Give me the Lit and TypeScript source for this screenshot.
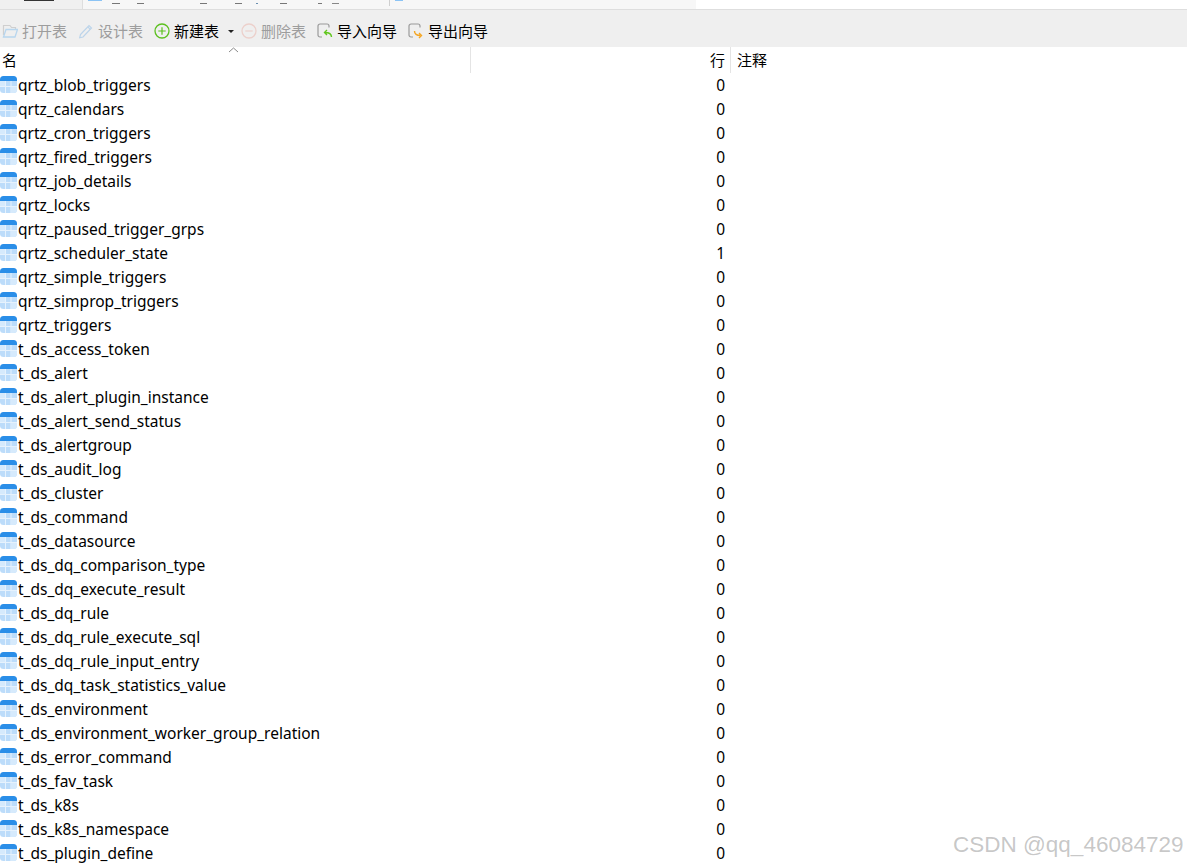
import { LitElement, html, css, svg } from "lit";
import { customElement } from "lit/decorators.js";

const ROWS: [string, number][] = [
  "qrtz_blob_triggers","qrtz_calendars","qrtz_cron_triggers","qrtz_fired_triggers","qrtz_job_details","qrtz_locks","qrtz_paused_trigger_grps","qrtz_scheduler_state","qrtz_simple_triggers","qrtz_simprop_triggers","qrtz_triggers","t_ds_access_token","t_ds_alert","t_ds_alert_plugin_instance","t_ds_alert_send_status","t_ds_alertgroup","t_ds_audit_log","t_ds_cluster","t_ds_command","t_ds_datasource","t_ds_dq_comparison_type","t_ds_dq_execute_result","t_ds_dq_rule","t_ds_dq_rule_execute_sql","t_ds_dq_rule_input_entry","t_ds_dq_task_statistics_value","t_ds_environment","t_ds_environment_worker_group_relation","t_ds_error_command","t_ds_fav_task","t_ds_k8s","t_ds_k8s_namespace","t_ds_plugin_define",
].map((n) => [n, n === "qrtz_scheduler_state" ? 1 : 0]);

const tableIcon = html`<svg class="ticon" width="17" height="17" viewBox="0 0 17 17">
  <path d="M0 5V3.500a3.500 3.500 0 0 1 3.500-3.500h10a3.500 3.500 0 0 1 3.500 3.500V5z" fill="#2a8ee8"/>
  <path d="M0 5h17v8.500a3.500 3.500 0 0 1-3.500 3.500h-10a3.500 3.500 0 0 1-3.500-3.500z" fill="#bcdcfa"/>
  <path d="M0 5h5v5H0zM11.500 10H17v3.500a3.500 3.500 0 0 1-3.500 3.500h-2z" fill="#d6eafc"/>
  <path d="M5.500 5v12M11 5v12M0 10.500h17" stroke="#e6f2fd" stroke-width="1"/>
</svg>`;

const icons = {
  open: svg`<path d="M1.500 12V2.500h6.500l1.500 2h4v2" fill="none" stroke="#cfcfcf" stroke-width="1.200"/><path d="M1.500 14l2.500-7.500h11.500L13 14z" fill="none" stroke="#b8d6ee" stroke-width="1.300"/>`,
  design: svg`<path d="M2.500 11.500L11 2.500l2.500 2.500-8.500 9-3.300.8z" fill="none" stroke="#bcd4ea" stroke-width="1.200"/><path d="M9.800 3.800l2.500 2.500" stroke="#bcd4ea" stroke-width="1.200"/>`,
  create: svg`<circle cx="8" cy="8" r="7" fill="none" stroke="#5cc01f" stroke-width="1.300"/><path d="M8 4.300v7.400M4.300 8h7.400" stroke="#5cc01f" stroke-width="1.200"/>`,
  remove: svg`<circle cx="8" cy="8" r="7" fill="none" stroke="#ecd0cb" stroke-width="1.300"/><path d="M4.300 8h7.400" stroke="#ecd0cb" stroke-width="1.200"/>`,
  imp: svg`<path d="M5 14H3a2 2 0 0 1-2-2V3a2 2 0 0 1 2-2h7a2 2 0 0 1 2 2v1.500" fill="none" stroke="#9a9a9a" stroke-width="1.200"/><path d="M14.500 14c0-3-2-4.500-6.500-4.500M10 7L7.500 9.500 10 12" fill="none" stroke="#62c71e" stroke-width="1.400"/>`,
  exp: svg`<path d="M5 14H3a2 2 0 0 1-2-2V3a2 2 0 0 1 2-2h7a2 2 0 0 1 2 2v1.500" fill="none" stroke="#9a9a9a" stroke-width="1.200"/><path d="M6.500 8c0 3 2 4.500 6 4.500M11 10l2.500 2.500L11 15" fill="none" stroke="#f5a623" stroke-width="1.400"/>`,
};

const TOOLS = [
  { icon: icons.open, label: "打开表", off: true, gap: 0 },
  { icon: icons.design, label: "设计表", off: true, gap: 11 },
  { icon: icons.create, label: "新建表", off: false, gap: 11, caret: true },
  { icon: icons.remove, label: "删除表", off: true, gap: 7 },
  { icon: icons.imp, label: "导入向导", off: false, gap: 11 },
  { icon: icons.exp, label: "导出向导", off: false, gap: 11 },
];

/* The slivers of tab titles left visible at the cropped top edge: [left offset, width, colour]. */
const SLIVERS: [number, number, string][] = [
  [10, 8, "#777"], [17, 7, "#777"], [56, 7, "#777"], [28, 7, "#777"], [14, 2, "#6a8fb0"],
  [22, 7, "#777"], [31, 4, "#777"], [10, 7, "#888"],
];

@customElement("app-root")
export class AppRoot extends LitElement {
  static styles = css`
    :host {
      display: block;
      height: 865px;
      overflow: hidden;
      position: relative;
      background: #fff;
      color: #000;
      font: 15.5px/24px "Noto Sans", "Noto Sans CJK SC", sans-serif;
    }
    .tabs {
      height: 10px;
      box-sizing: border-box;
      background: #f0f0f0;
      border-bottom: 1px solid #dedede;
      display: flex;
      overflow: hidden;
    }
    .tab-left {
      width: 82px;
      flex: none;
      padding-left: 24px;
      box-sizing: border-box;
    }
    .tab-left i {
      display: block;
      width: 30px;
      height: 1px;
      background: #333;
    }
    .tab-panel {
      width: 614px;
      flex: none;
      background: #f7f7f7;
      border-left: 1px solid #dedede;
      box-sizing: border-box;
      display: flex;
    }
    .tab-blue {
      width: 14px;
      height: 1px;
      margin-left: 5px;
      background: #8cc4f5;
      flex: none;
    }
    .sliver {
      height: 1px;
      margin-top: 3px;
      flex: none;
    }
    .tab-sep {
      width: 1px;
      height: 6px;
      margin-left: 50px;
      background: #cfcfcf;
      flex: none;
    }
    .tab-blue2 {
      width: 8px;
      height: 1px;
      margin-left: 5px;
      background: #8cc4f5;
      flex: none;
    }
    .tab-rest {
      flex: 1;
      background: #fff;
    }
    .toolbar {
      height: 37px;
      background: #efefef;
      display: flex;
      align-items: center;
      padding: 5px 0 0 2px;
      box-sizing: border-box;
      font-size: 15px;
    }
    .tool {
      display: flex;
      align-items: center;
      gap: 4px;
    }
    .tool.off {
      color: #9d9d9d;
    }
    .tool svg {
      flex: none;
    }
    .caret {
      width: 0;
      height: 0;
      margin-left: 5px;
      border: 3px solid transparent;
      border-top: 3px solid #222;
      border-bottom: 0;
    }
    .head {
      height: 26px;
      display: grid;
      grid-template-columns: 471px 260px 1fr;
      line-height: 26px;
      font-size: 15px;
      position: relative;
    }
    .head > div {
      box-sizing: border-box;
    }
    .h-name {
      padding-left: 2px;
      border-right: 1px solid #e4e4e4;
    }
    .h-rows {
      text-align: right;
      padding-right: 5px;
      border-right: 1px solid #e4e4e4;
    }
    .h-note {
      padding-left: 6px;
    }
    .sort {
      position: absolute;
      left: 228px;
      top: 0;
    }
    .row {
      height: 24px;
      display: grid;
      grid-template-columns: 471px 254px;
    }
    .name {
      display: flex;
      align-items: center;
      gap: 1px;
      white-space: nowrap;
    }
    .ticon {
      flex: none;
      margin-top: -1px;
    }
    .count {
      text-align: right;
    }
    .mark {
      position: absolute;
      left: 953px;
      top: 830px;
      color: rgba(120, 120, 120, 0.42);
      font: 22.5px/30px "Liberation Sans", sans-serif;
      white-space: nowrap;
      pointer-events: none;
    }
  `;

  render() {
    return html`
      <div class="tabs">
        <div class="tab-left"><i></i></div>
        <div class="tab-panel">
          <span class="tab-blue"></span>
          ${SLIVERS.map(
            ([m, w, c]) =>
              html`<span class="sliver" style="margin-left:${m}px;width:${w}px;background:${c}"></span>`
          )}
          <span class="tab-sep"></span>
          <span class="tab-blue2"></span>
        </div>
        <div class="tab-rest"></div>
      </div>
      <div class="toolbar">
        ${TOOLS.map(
          (t) => html`<div class="tool ${t.off ? "off" : ""}" style="margin-left:${t.gap}px">
            <svg width="16" height="16" viewBox="0 0 16 16">${t.icon}</svg>
            <span>${t.label}</span>
            ${t.caret ? html`<span class="caret"></span>` : ""}
          </div>`
        )}
      </div>
      <div class="head">
        <div class="h-name">名</div>
        <div class="h-rows">行</div>
        <div class="h-note">注释</div>
        <svg class="sort" width="11" height="6" viewBox="0 0 11 6">
          <path d="M1 5l4.500-4 4.500 4" fill="none" stroke="#8a8a8a" stroke-width="1"/>
        </svg>
      </div>
      ${ROWS.map(
        ([n, c]) => html`<div class="row">
          <div class="name">${tableIcon}<span>${n}</span></div>
          <div class="count">${c}</div>
        </div>`
      )}
      <div class="mark">CSDN @qq_46084729</div>
    `;
  }
}
